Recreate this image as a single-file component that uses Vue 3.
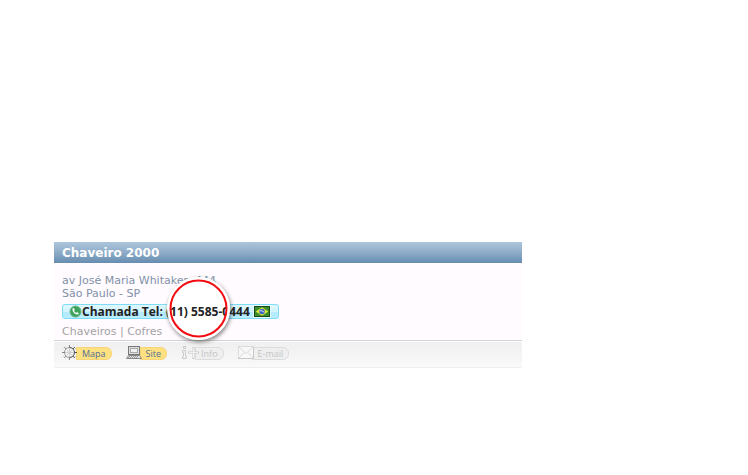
<script setup>
const listing = {
  name: 'Chaveiro 2000',
  street: 'av José Maria Whitaker, 444',
  city: 'São Paulo - SP',
  phone: 'Chamada Tel: (11) 5585-0444',
  tags: 'Chaveiros | Cofres',
}
</script>

<template>
  <article class="card">
    <h2 class="title">{{ listing.name }}</h2>
    <div class="body">
      <address class="address">{{ listing.street }}<br />{{ listing.city }}</address>
      <div class="call-row">
        <a class="call" href="#call">
          <svg class="phone" width="13" height="13" viewBox="0 0 13 13" aria-hidden="true">
            <circle cx="6.5" cy="6.5" r="5.5" fill="#3da35c" stroke="#6fb587" />
            <path d="M3.6 3.6 4.8 3 5.8 4.8 5 5.8C5.4 6.8 6.2 7.5 7.2 7.9L8.2 7.1 9.8 8.2 9.2 9.4C6.4 10.4 2.9 7 3.6 3.6Z" fill="#fff" />
          </svg>
          <span class="number">{{ listing.phone }}</span>
          <svg class="flag" width="18" height="13" viewBox="0 0 18 13" aria-hidden="true">
            <rect width="18" height="13" fill="#e9fbff" />
            <rect x="1.5" y="1.5" width="15" height="10" fill="#3b8e2c" stroke="#17491c" />
            <path d="M9 2.2 15.2 6.5 9 10.8 2.8 6.5Z" fill="#e6e838" />
            <circle cx="9" cy="6.5" r="2.8" fill="#3c66c4" />
            <path d="M6.5 5.8Q9 5 11.4 7.3" fill="none" stroke="#cfe0fb" />
          </svg>
        </a>
        <svg class="lens lens-back" width="80" height="80" viewBox="0 0 80 80" aria-hidden="true">
          <circle cx="40.5" cy="40.5" r="31.5" fill="#fff" />
        </svg>
        <svg class="lens lens-ring" width="80" height="80" viewBox="0 0 80 80" aria-hidden="true">
          <circle cx="40.5" cy="40.5" r="29.5" fill="none" stroke="#fff" stroke-width="4" />
          <circle cx="40.5" cy="40.5" r="28" fill="none" stroke="#f20c12" stroke-width="2" />
        </svg>
      </div>
      <p class="tags">{{ listing.tags }}</p>
    </div>
    <footer class="actions">
      <a class="action" href="#mapa">
        <svg width="16" height="16" viewBox="0 0 16 16" aria-hidden="true">
          <circle cx="7.5" cy="7.5" r="5" fill="#f4f4f4" stroke="#999" />
          <path d="M7.5 2.5A5 5 0 0 1 7.5 12.5" fill="none" stroke="#666" />
          <path d="M7.5 3V12M3 7.5H12M4.5 4.5 10.5 10.5M10.5 4.5 4.5 10.5" stroke="#d0d0d0" />
          <path d="M7.5 0V3M7.5 12V15M0 7.5H3" stroke="#888" />
          <path d="M12 7.5H15" stroke="#555" />
          <path d="M1.8 3.4 3.4 1.8M1.8 11.6 3.4 13.2M2.6 2.6 4 4M2.6 12.4 4 11" stroke="#999" />
          <path d="M11.6 1.8 13.2 3.4M11.6 13.2 13.2 11.6M12.4 2.6 11 4M12.4 12.4 11 11" stroke="#666" />
        </svg>
        <span class="pill">Mapa</span>
      </a>
      <a class="action" href="#site">
        <svg width="16" height="16" viewBox="0 0 16 16" aria-hidden="true">
          <rect x="2.5" y="1.5" width="11" height="8" fill="#ddd" stroke="#777" />
          <rect x="4.5" y="3.5" width="7" height="4" fill="#f1f1f1" stroke="#aaa" />
          <path d="M2.5 10.5H13.5L15.5 13.5H.5Z" fill="#e6e6e6" stroke="#888" />
          <path d="M3 11.5H12M2 12.5H11" stroke="#999" stroke-dasharray="1 1" />
        </svg>
        <span class="pill">Site</span>
      </a>
      <button class="action" type="button" disabled>
        <svg width="16" height="16" viewBox="0 0 16 16" aria-hidden="true">
          <rect x="2.5" y="1.5" width="2" height="2" fill="#f4f4f4" stroke="#ccc" />
          <path d="M1.5 5.5H4.5V11.5H5.5V13.5H1.5V11.5H2.5V7.5H1.5Z" fill="#f4f4f4" stroke="#ccc" />
          <path d="M12.5 2V14M7 7.5H18" stroke="#cacaca" stroke-width="2" />
          <path d="M12.5 3V13M8 7.5H17" stroke="#f2f2f2" />
        </svg>
        <span class="pill">Info</span>
      </button>
      <button class="action" type="button" disabled>
        <svg width="16" height="16" viewBox="0 0 16 16" aria-hidden="true">
          <rect x=".5" y="1.5" width="15" height="12" fill="#f8f8f8" stroke="#dcdcdc" />
          <path d="M1 2 8 8.5 15 2M1 13 6 7.5M15 13 10 7.5" fill="none" stroke="#dadada" />
          <path d="M0 13.5H15.5V2" fill="none" stroke="#c8c8c8" />
        </svg>
        <span class="pill">E-mail</span>
      </button>
    </footer>
  </article>
</template>

<style scoped>
.card {
  margin: 242px 226px 0 54px;
  font-family: Verdana, "DejaVu Sans", sans-serif;
  font-size: 11px;
}
.title {
  margin: 0;
  padding: 1px 8px 0;
  font-size: 12px;
  line-height: 20px;
  color: #fff;
  background: linear-gradient(#adc5dc, #8eacc8 50%, #668cb0);
}
.body {
  padding: 11px 8px 2px;
  background: #fffbff;
}
.address {
  font-style: normal;
  line-height: 13px;
  color: #8292a8;
}
.call-row {
  position: relative;
  display: flex;
  margin: 4px 0 6px;
}
.call {
  display: flex;
  align-items: center;
  box-sizing: border-box;
  height: 15px;
  padding: 0 7px 0 6px;
  border: 1px solid #7fdcf8;
  border-radius: 3px;
  background: linear-gradient(#e0f8ff, #d0f3ff 50%, #b5ebff 51%, #b9edff);
  color: #222;
  text-decoration: none;
}
.number {
  position: relative;
  z-index: 2;
  font: bold 12px/13px "Open Sans", "Noto Sans", sans-serif;
  white-space: nowrap;
}
.flag {
  margin-left: 3px;
}
.lens {
  position: absolute;
  left: 96px;
  top: -36px;
  pointer-events: none;
}
.lens-back {
  z-index: 1;
  filter: drop-shadow(1px 2px 2px rgba(0, 0, 0, 0.5));
}
.lens-ring {
  z-index: 3;
}
.tags {
  margin: 0;
  line-height: 13px;
  color: #a4a4a4;
}
.actions {
  display: flex;
  gap: 14px;
  padding: 4px 8px 6px;
  border-top: 1px solid #d2d2d2;
  border-bottom: 1px solid #eee;
  box-shadow: inset 0 1px #fff;
  background: linear-gradient(#efefef, #f9f9f9);
}
.action {
  display: flex;
  align-items: center;
  padding: 0;
  border: 0;
  background: none;
  font: 9px/12px "Open Sans", "Noto Sans", sans-serif;
  color: #4f6f92;
  text-decoration: none;
}
.action svg {
  position: relative;
  z-index: 1;
  overflow: visible;
}
.pill {
  box-sizing: border-box;
  height: 13px;
  margin-left: -2px;
  padding: 0 5px;
  border: 1px solid #f8d478;
  border-radius: 0 6px 6px 0;
  background: #ffe182;
}
.action:disabled {
  color: #c4c4c4;
}
.action:disabled .pill {
  border-color: #dcdcdc;
  background: #efefef;
}
</style>
